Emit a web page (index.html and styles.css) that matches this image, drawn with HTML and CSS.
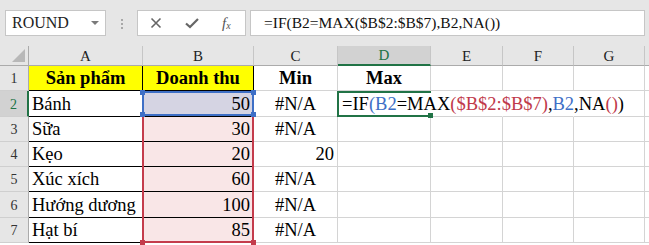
FILE: index.html
```html
<!DOCTYPE html>
<html lang="vi">
<head>
<meta charset="utf-8">
<title>Excel - MAX</title>
<link rel="stylesheet" href="styles.css">
</head>
<body>
<div class="toolbar">
  <div class="namebox"><span>ROUND</span><span class="caret"></span></div>
  <div class="grip"><i></i><i></i><i></i></div>
  <div class="fxbox">
    <svg class="ico" width="12" height="12" viewBox="0 0 12 12"><path d="M1.5 1.5 L10.5 10.5 M10.5 1.5 L1.5 10.5" stroke="#666" stroke-width="1.6" fill="none"/></svg>
    <svg class="ico" width="14" height="12" viewBox="0 0 14 12"><path d="M1 6.5 L5 10 L13 2" stroke="#666" stroke-width="2.2" fill="none"/></svg>
    <span class="fx">f<sub>x</sub></span>
  </div>
  <div class="formula">=IF(B2=MAX($B$2:$B$7),B2,NA())</div>
</div>
<div class="sheet">
  <div class="corner"><span class="tri"></span></div>
  <div class="ch">A</div><div class="ch">B</div><div class="ch">C</div><div class="ch sel">D</div><div class="ch">E</div><div class="ch">F</div><div class="ch">G</div><div class="ch"></div>

  <div class="rh">1</div>
  <div class="c tb yel bold ctr">Sản phẩm</div>
  <div class="c tb yel bold ctr">Doanh thu</div>
  <div class="c bold ctr">Min</div>
  <div class="c bold ctr">Max</div>
  <div class="c"></div><div class="c"></div><div class="c"></div><div class="c"></div>

  <div class="rh sel">2</div>
  <div class="c tb">Bánh</div>
  <div class="c tb num b2">50<span class="ref-red"></span><span class="ref-blue"></span></div>
  <div class="c ctr">#N/A</div>
  <div class="c active nor">=IF<span class="cb">(B2</span>=MAX<span class="cr">($B$2:$B$7)</span>,<span class="cb">B2</span>,NA<span class="cr">()</span>)<span class="act"></span></div>
  <div class="c nor"></div><div class="c nor"></div><div class="c"></div><div class="c"></div>

  <div class="rh">3</div>
  <div class="c tb">Sữa</div>
  <div class="c tb num pink">30</div>
  <div class="c ctr">#N/A</div>
  <div class="c"></div><div class="c"></div><div class="c"></div><div class="c"></div><div class="c"></div>

  <div class="rh">4</div>
  <div class="c tb">Kẹo</div>
  <div class="c tb num pink">20</div>
  <div class="c num">20</div>
  <div class="c"></div><div class="c"></div><div class="c"></div><div class="c"></div><div class="c"></div>

  <div class="rh">5</div>
  <div class="c tb">Xúc xích</div>
  <div class="c tb num pink">60</div>
  <div class="c ctr">#N/A</div>
  <div class="c"></div><div class="c"></div><div class="c"></div><div class="c"></div><div class="c"></div>

  <div class="rh">6</div>
  <div class="c tb">Hướng dương</div>
  <div class="c tb num pink">100</div>
  <div class="c ctr">#N/A</div>
  <div class="c"></div><div class="c"></div><div class="c"></div><div class="c"></div><div class="c"></div>

  <div class="rh">7</div>
  <div class="c tb">Hạt bí</div>
  <div class="c tb num pink">85</div>
  <div class="c ctr">#N/A</div>
  <div class="c"></div><div class="c"></div><div class="c"></div><div class="c"></div><div class="c"></div>
</div>
</body>
</html>
```
FILE: styles.css
```css
* { box-sizing: border-box; margin: 0; padding: 0; }
html, body { background: #fff; }
body {
  width: 649px;
  height: 245px;
  overflow: hidden;
  font-family: "Liberation Serif", "Times New Roman", serif;
  color: #000;
}

/* ---------- formula bar ---------- */
.toolbar {
  height: 46px;
  background: #e6e6e6;
  display: flex;
  align-items: flex-start;
  padding: 10px 4px 0 5px;
}
.namebox {
  width: 101px;
  height: 26px;
  background: #fff;
  border: 1px solid #c6c6c6;
  display: flex;
  align-items: center;
  justify-content: space-between;
  padding: 0 6px 0 6px;
  font-size: 16px;
  color: #222;
}
.caret {
  width: 0;
  height: 0;
  border-left: 4px solid transparent;
  border-right: 4px solid transparent;
  border-top: 4px solid #7a7a7a;
}
.grip {
  width: 31px;
  height: 26px;
  display: flex;
  flex-direction: column;
  align-items: center;
  justify-content: center;
  gap: 2px;
  padding-top: 1px;
}
.grip i {
  display: block;
  width: 2px;
  height: 2px;
  background: #a8a8a8;
}
.fxbox {
  width: 109px;
  height: 26px;
  background: #fff;
  border: 1px solid #c6c6c6;
  display: flex;
  align-items: center;
  gap: 23px;
  padding-left: 12px;
}
.fx {
  font-style: italic;
  font-size: 15px;
  color: #555;
  line-height: 1;
}
.fx sub {
  font-size: 10px;
  vertical-align: -1px;
}
.formula {
  flex: 1;
  margin-left: 4px;
  height: 26px;
  background: #fff;
  border: 1px solid #c6c6c6;
  padding-left: 13px;
  font-size: 15.5px;
  line-height: 24px;
  white-space: nowrap;
  color: #111;
}

/* ---------- grid ---------- */
.sheet {
  display: grid;
  grid-template-columns: 29px 114px 111px 84px 93px 72px 71px 71px 1fr;
  grid-template-rows: 20px 25px 26px 25px 25px 25px 26px 25px;
}
.corner {
  background: #e6e6e6;
  border-right: 1px solid #ababab;
  border-bottom: 1px solid #ababab;
  display: flex;
  align-items: flex-end;
  justify-content: flex-end;
  padding: 0 3px 3px 0;
}
.tri {
  width: 0;
  height: 0;
  border-left: 13px solid transparent;
  border-bottom: 13px solid #b8b8b8;
}
.ch {
  background: #e6e6e6;
  border-right: 1px solid #c6c6c6;
  border-bottom: 1px solid #ababab;
  display: flex;
  align-items: center;
  justify-content: center;
  font-size: 15px;
  color: #222;
  padding-top: 1px;
}
.ch.sel {
  background: #d2d2d2;
  color: #217346;
  border-bottom: 2px solid #217346;
}
.rh {
  background: #e6e6e6;
  border-right: 1px solid #ababab;
  border-bottom: 1px solid #cfcfcf;
  display: flex;
  align-items: center;
  justify-content: center;
  font-size: 14px;
  color: #333;
  padding-top: 2px;
}
.rh.sel {
  background: #d2d2d2;
  color: #217346;
  border-right: 2px solid #217346;
}
.c {
  border-right: 1px solid #d4d4d4;
  border-bottom: 1px solid #d4d4d4;
  display: flex;
  align-items: flex-end;
  font-size: 18.5px;
  line-height: 21px;
  padding: 0 3px 1px 3px;
  white-space: nowrap;
}
.c.tb {
  border-right-color: #000;
  border-bottom-color: #000;
}
.yel { background: #ffff00; }
.bold { font-weight: bold; }
.ctr { justify-content: center; }
.num { justify-content: flex-end; padding-right: 3px; }
.pink { background: #f9e6e7; }
.b2 {
  background: #d5d4e3;
  position: relative;
}
.nor { border-right-color: transparent; }
.active {
  position: relative;
  overflow: visible;
  padding-left: 4px;
}
.cb { color: #3e6fc6; }
.cr { color: #c0394a; }

/* ---------- overlays (reference highlights, active cell) ---------- */
.ref-red {
  position: absolute;
  z-index: 2;
  left: -1px;
  right: -1px;
  top: 0;
  height: 152px;
  border: 2px solid #c43c4c;
}
.ref-red::before,
.ref-red::after {
  content: "";
  position: absolute;
  bottom: -4px;
  width: 5px;
  height: 5px;
  background: #c43c4c;
}
.ref-red::before { left: -4px; }
.ref-red::after { right: -4px; }
.ref-blue {
  position: absolute;
  z-index: 3;
  left: -1px;
  right: -1px;
  top: 0;
  bottom: 0;
  border: 2px solid #3e6fc6;
}
.ref-blue::before,
.ref-blue::after {
  content: "";
  position: absolute;
  left: -4px;
  right: -4px;
  height: 5px;
  background:
    linear-gradient(#3e6fc6, #3e6fc6) left / 5px 5px no-repeat,
    linear-gradient(#3e6fc6, #3e6fc6) right / 5px 5px no-repeat;
}
.ref-blue::before { top: -3px; }
.ref-blue::after { bottom: -3px; }
.act {
  position: absolute;
  z-index: 2;
  left: -1px;
  right: -1px;
  top: 0;
  bottom: -1px;
  border: 2px solid #217346;
  border-right: none;
}
.act::after {
  content: "";
  position: absolute;
  right: -2px;
  bottom: -3px;
  width: 5px;
  height: 5px;
  background: #217346;
}
```
